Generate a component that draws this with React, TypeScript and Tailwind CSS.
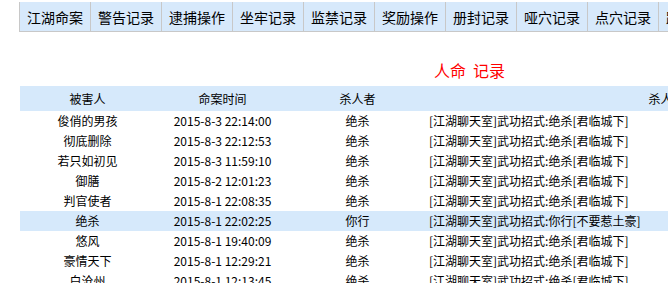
import React from 'react';

const tabs = ['江湖命案', '警告记录', '逮捕操作', '坐牢记录', '监禁记录', '奖励操作', '册封记录', '哑穴记录', '点穴记录', '跟踪记录'];

const rows = [
    { victim: '俊俏的男孩', time: '2015-8-3 22:14:00', killer: '绝杀', how: '[江湖聊天室]武功招式:绝杀[君临城下]' },
    { victim: '彻底删除', time: '2015-8-3 22:12:53', killer: '绝杀', how: '[江湖聊天室]武功招式:绝杀[君临城下]' },
    { victim: '若只如初见', time: '2015-8-3 11:59:10', killer: '绝杀', how: '[江湖聊天室]武功招式:绝杀[君临城下]' },
    { victim: '御膳', time: '2015-8-2 12:01:23', killer: '绝杀', how: '[江湖聊天室]武功招式:绝杀[君临城下]' },
    { victim: '判官使者', time: '2015-8-1 22:08:35', killer: '绝杀', how: '[江湖聊天室]武功招式:绝杀[君临城下]' },
    { victim: '绝杀', time: '2015-8-1 22:02:25', killer: '你行', how: '[江湖聊天室]武功招式:你行[不要惹土豪]', active: true },
    { victim: '悠风', time: '2015-8-1 19:40:09', killer: '绝杀', how: '[江湖聊天室]武功招式:绝杀[君临城下]' },
    { victim: '豪情天下', time: '2015-8-1 12:29:21', killer: '绝杀', how: '[江湖聊天室]武功招式:绝杀[君临城下]' },
    { victim: '白沧州', time: '2015-8-1 12:13:45', killer: '绝杀', how: '[江湖聊天室]武功招式:绝杀[君临城下]' },
];

export default function App() {
    return (
        <div className="w-full h-[283px] overflow-hidden bg-white text-black font-['Noto_Sans_CJK_SC',sans-serif]">
            <div className="w-[1000px] pl-[19px] pt-[2px]">
                {/* tab strip */}
                <div className="flex">
                    {tabs.map((t) => (
                        <div
                            key={t}
                            className="w-[71px] h-[30px] shrink-0 flex items-center justify-center bg-[#d7e9fb] border-l border-b border-[#c8c8c8] text-[14px] leading-none"
                        >
                            {t}
                        </div>
                    ))}
                </div>

                <div className="w-[901px] h-[54px] flex items-end justify-center pb-[8px] text-[16px] leading-[16px] text-[#ff0000]">
                    人命&nbsp;&nbsp;记录
                </div>

                <table className="ml-[1px] w-[900px] table-fixed border-collapse text-[12px] leading-none">
                    <colgroup>
                        <col className="w-[135px]" />
                        <col className="w-[135px]" />
                        <col className="w-[135px]" />
                        <col />
                    </colgroup>
                    <thead>
                        <tr className="h-[25px] bg-[#d6e9fb]">
                            <th className="font-normal text-center p-0">被害人</th>
                            <th className="font-normal text-center p-0">命案时间</th>
                            <th className="font-normal text-center p-0">杀人者</th>
                            <th className="font-normal text-center p-0">杀人手法</th>
                        </tr>
                    </thead>
                    <tbody>
                        {rows.map((r, i) => (
                            <tr key={i} className={r.active ? 'h-[20px] bg-[#d6e9fb]' : 'h-[20px]'}>
                                <td className="text-center p-0">{r.victim}</td>
                                <td className="text-center p-0">{r.time}</td>
                                <td className="text-center p-0">{r.killer}</td>
                                <td className="text-left p-0 pl-[4px] whitespace-nowrap">{r.how}</td>
                            </tr>
                        ))}
                    </tbody>
                </table>
            </div>
        </div>
    );
}
